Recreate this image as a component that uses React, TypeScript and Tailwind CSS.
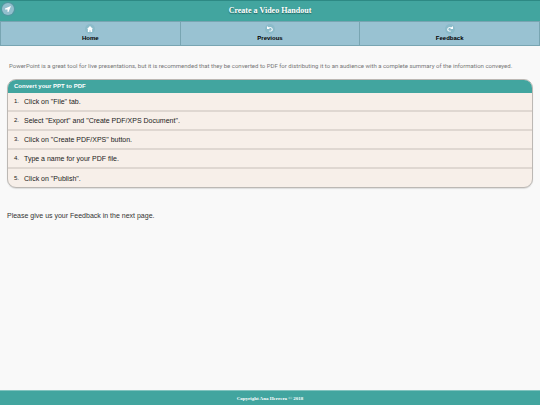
import type { ReactNode } from 'react';

const steps = [
    'Click on "File" tab.',
    'Select "Export" and "Create PDF/XPS Document".',
    'Click on "Create PDF/XPS" button.',
    'Type a name for your PDF file.',
    'Click on "Publish".',
];

const serif = "font-['Liberation_Serif',serif]";

function NavIcon({ children }: { children: ReactNode }) {
    return (
        <span className="flex size-2.5 items-center justify-center rounded-full bg-[#8bbbca]">
            <svg viewBox="0 0 14 14" className="size-1.5" fill="white" aria-hidden="true">
                {children}
            </svg>
        </span>
    );
}

const navItems = [
    {
        label: 'Home',
        icon: <path d="M7 0 0 7h2v7h4v-4h2v4h4V7h2z" />,
    },
    {
        label: 'Previous',
        icon: <path d="M0 0v7h7L4.500 4.500C8 3.300 11 5.200 11 8c0 2-1.700 3-4 3H5v2h2c4 0 6.500-1.700 6.500-5C13.500 3.500 8 .5 3 3z" />,
    },
    {
        label: 'Feedback',
        icon: <path d="M14 0v7H7l2.500-2.500C6 3.300 3 5.200 3 8c0 2 1.700 3 4 3h2v2H7C3 13 .5 11.300.5 8 .5 3.500 6 .5 11 3z" />,
    },
];

export default function App() {
    return (
        <div className="flex min-h-screen flex-col bg-[#f9f9f9] font-['Liberation_Sans',sans-serif] text-[#333333]">
            <header className="relative flex h-[21px] items-center justify-center border-t border-[#2d8984] bg-[#42a59f]">
                <button
                    aria-label="Navigate"
                    className="absolute top-0.5 left-0.5 flex size-3 items-center justify-center rounded-full bg-[#92bfcd] shadow-[0_0_1px_1px_#5596a0]"
                >
                    <svg viewBox="0 0 14 14" className="size-1.5" fill="white" aria-hidden="true">
                        <path d="M14 0 0 6v2h6v6h2z" />
                    </svg>
                </button>
                <h1 className={`${serif} text-[8px] leading-[10px] font-bold text-white [text-shadow:0_1px_1px_#22625e]`}>
                    Create a Video Handout
                </h1>
            </header>

            <nav className="grid h-[25px] grid-cols-3 border-y border-r border-[#78a5b2] bg-[#99c2d2]">
                {navItems.map((item) => (
                    <a
                        key={item.label}
                        href="#"
                        className="flex flex-col items-center border-l border-[#78a5b2] pt-0.5 text-[6px] leading-[8px] font-bold text-black"
                    >
                        <NavIcon>{item.icon}</NavIcon>
                        <span>{item.label}</span>
                    </a>
                ))}
            </nav>

            <main className="flex-1 px-[7px] pt-[15px]">
                <p className="px-0.5 font-[Roboto,sans-serif] text-[6px] leading-[9px] text-[#777777]">
                    PowerPoint is a great tool for live presentations, but it is recommended that they be converted to PDF for
                    distributing it to an audience with a complete summary of the information conveyed.
                </p>

                <section className="mt-[9px] overflow-hidden rounded-[9px] border border-[#bcb8b4] bg-[#f7efe9] shadow-[0_1px_1px_#dddddd]">
                    <h2 className="-mx-px -mt-px h-3.5 border-t border-[#2d8984] bg-[#42a59f] pl-[7px] text-[6px] leading-[13px] font-bold text-white">
                        Convert your PPT to PDF
                    </h2>
                    <ol>
                        {steps.map((step, index) => (
                            <li
                                key={step}
                                className="flex h-[19px] items-center border-b-2 border-[#dfd7d1] pl-1.5 text-[7px] leading-[9px] text-[#222222] last:h-[18px] last:border-b-0"
                            >
                                <span className="w-2.5 text-[6px]">{index + 1}.</span>
                                <span>{step}</span>
                            </li>
                        ))}
                    </ol>
                </section>

                <p className="mt-[23px] text-[7px] leading-[9px]">Please give us your Feedback in the next page.</p>
            </main>

            <footer className="flex h-[15px] items-center justify-center border-t border-[#82c4bf] bg-[#42a59f]">
                <p className={`${serif} text-[5px] leading-[7px] font-bold text-white`}>Copyright Ana Herrera © 2018</p>
            </footer>
        </div>
    );
}
